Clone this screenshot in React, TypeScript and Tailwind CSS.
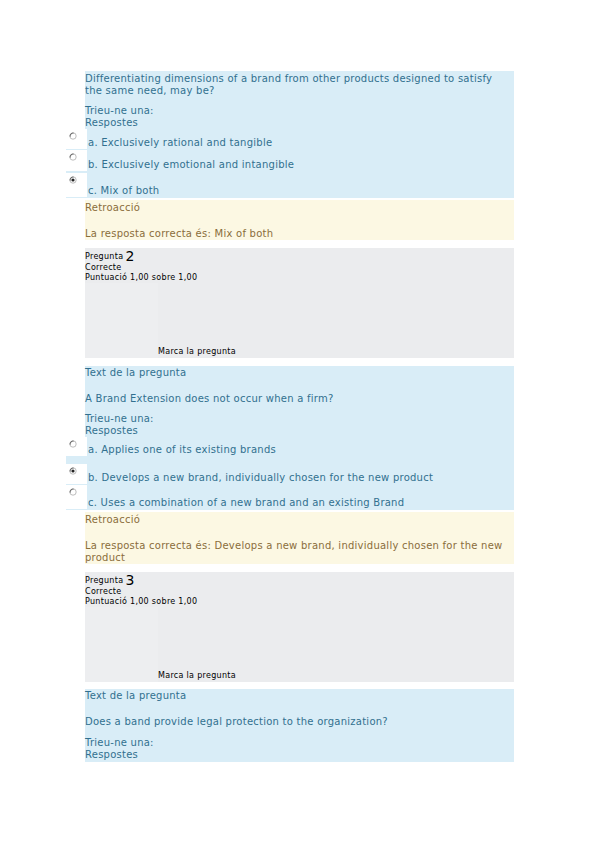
import React from "react";

const F = { fontFamily: '"DejaVu Sans", Verdana, sans-serif' };

function Radio({ checked }: { checked?: boolean }) {
  return (
    <svg width="8" height="8" viewBox="0 0 8 8" className="block">
      <circle cx="4" cy="4" r="3.2" fill="#fff" stroke="#b5b5b5" strokeWidth="0.9" />
      <path d="M1.2 4.6 A3 3 0 0 1 4.6 1.1" fill="none" stroke="#555" strokeWidth="0.9" />
      {checked && <circle cx="4" cy="4" r="1.6" fill="#222" />}
    </svg>
  );
}

function Row({ h, label, checked, mt }: { h: string; label: string; checked?: boolean; mt: string }) {
  return (
    <div className={`flex items-end ${h} ${mt}`}>
      <div className="w-[21px] h-full bg-white shrink-0 pl-[3px] pt-[3px]">
        <Radio checked={checked} />
      </div>
      <div className="pl-[1px] leading-[12px]">{label}</div>
    </div>
  );
}

function Grey({ n }: { n: string }) {
  return (
    <div className="ml-[19px] mt-[8px] h-[110px] bg-[#ebecee] flex flex-col text-[8px] tracking-[0.3px] text-[#000] leading-[10px] pt-[1px]">
      <div className="flex items-end leading-[12px]">
        <span>Pregunta</span>
        <span className="text-[14px] leading-[14px] ml-[2px] tracking-normal">{n}</span>
      </div>
      <div>Correcte</div>
      <div>Puntuació 1,00 sobre 1,00</div>
      <div className="flex flex-1">
        <div className="w-[73px] bg-[#edeef0]" />
        <div className="flex-1 flex items-end pb-[1px]">Marca la pregunta</div>
      </div>
    </div>
  );
}

export default function App() {
  return (
    <div className="w-[599px] h-[848px] bg-white text-[10px] tracking-[0.25px]" style={F}>
      <div className="pl-[66px] w-[514px] pt-[71px]">
        {/* Q1 */}
        <div className="text-[#31708f]">
          <div className="ml-[19px] bg-[#d9edf7] pt-[2px] leading-[12px]">
            <div className="pr-[14px]">Differentiating dimensions of a brand from other products designed to satisfy the same need, may be?</div>
            <div className="mt-[8px]">Trieu-ne una:</div>
            <div>Respostes</div>
          </div>
          <div className="bg-[#d9edf7] pb-[1px]">
            <Row h="h-[20px]" mt="" label="a. Exclusively rational and tangible" />
            <Row h="h-[21px]" mt="mt-[1px]" label="b. Exclusively emotional and intangible" />
            <Row h="h-[24px]" mt="mt-[2px]" label="c. Mix of both" checked />
          </div>
        </div>
        <div className="ml-[19px] mt-[2px] bg-[#fcf8e3] text-[#8a6d3b] leading-[12px] pt-[2px]">
          <div>Retroacció</div>
          <div className="mt-[14px]">La resposta correcta és: Mix of both</div>
        </div>
        <Grey n="2" />

        {/* Q2 */}
        <div className="text-[#31708f] mt-[8px]">
          <div className="ml-[19px] bg-[#d9edf7] leading-[12px] pt-[1px]">
            <div>Text de la pregunta</div>
            <div className="mt-[14px]">A Brand Extension does not occur when a firm?</div>
            <div className="mt-[8px]">Trieu-ne una:</div>
            <div>Respostes</div>
          </div>
          <div className="bg-[#d9edf7] pb-[1px]">
            <Row h="h-[19px]" mt="" label="a. Applies one of its existing brands" />
            <Row h="h-[20px]" mt="mt-[8px]" label="b. Develops a new brand, individually chosen for the new product" checked />
            <Row h="h-[24px]" mt="mt-[1px]" label="c. Uses a combination of a new brand and an existing Brand" />
          </div>
        </div>
        <div className="ml-[19px] mt-[2px] bg-[#fcf8e3] text-[#8a6d3b] leading-[12px] pt-[2px]">
          <div>Retroacció</div>
          <div className="mt-[14px]">La resposta correcta és: Develops a new brand, individually chosen for the new product</div>
        </div>
        <Grey n="3" />

        {/* Q3 */}
        <div className="ml-[19px] mt-[7px] bg-[#d9edf7] text-[#31708f] leading-[12px] pt-[1px] pb-[1px]">
          <div>Text de la pregunta</div>
          <div className="mt-[14px]">Does a band provide legal protection to the organization?</div>
          <div className="mt-[9px]">Trieu-ne una:</div>
          <div>Respostes</div>
        </div>
      </div>
    </div>
  );
}
